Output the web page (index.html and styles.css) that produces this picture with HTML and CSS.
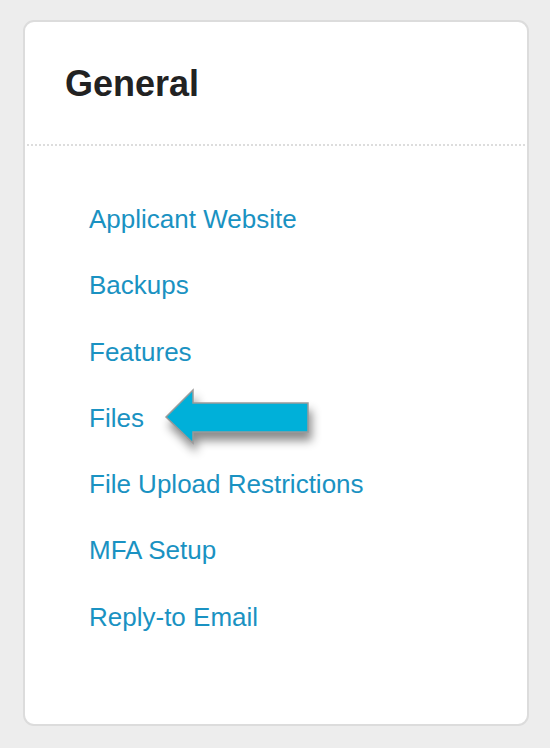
FILE: index.html
```html
<!DOCTYPE html>
<html>
<head>
<meta charset="utf-8">
<link rel="stylesheet" href="styles.css">
</head>
<body>
<div class="card">
  <div class="card-header"><h2 class="title">General</h2></div>
  <ul class="links">
    <li><a href="#">Applicant Website</a></li>
    <li><a href="#">Backups</a></li>
    <li><a href="#">Features</a></li>
    <li class="has-arrow"><a href="#">Files</a>
      <svg class="arrow" width="170" height="80" viewBox="0 0 170 80">
        <polygon points="6,32 33,5 33,18 148,18 148,47 33,47 33,58" fill="#00b0d9" stroke="#9a9a9a" stroke-width="1.5" stroke-linejoin="miter"/>
      </svg>
    </li>
    <li><a href="#">File Upload Restrictions</a></li>
    <li><a href="#">MFA Setup</a></li>
    <li><a href="#">Reply-to Email</a></li>
  </ul>
</div>
</body>
</html>
```
FILE: styles.css
```css
html, body {
  margin: 0;
  padding: 0;
  background: #ededed;
}
body {
  padding: 20px 0 0 23px;
  font-family: "Liberation Sans", Arial, sans-serif;
}
.card {
  box-sizing: border-box;
  width: 506px;
  height: 706px;
  background: #fff;
  border: 2px solid #dcdcdc;
  border-radius: 11px;
  position: relative;
}
.card-header {
  margin: 0 2px;
  padding: 40px 0 38px 38px;
  border-bottom: 2px dotted #dddddd;
}
.title {
  margin: 0;
  font-size: 36px;
  line-height: 44px;
  font-weight: bold;
  color: #222;
}
.links {
  list-style: none;
  margin: 0;
  padding: 40px 0 0 64px;
}
.links li {
  font-size: 26px;
  line-height: 66.3px;
}
.links a {
  color: #1a92c2;
  text-decoration: none;
}
.has-arrow {
  position: relative;
}
.arrow {
  position: absolute;
  left: 71px;
  top: 0;
  filter: drop-shadow(3px 8px 5px rgba(0,0,0,0.45));
}
```
